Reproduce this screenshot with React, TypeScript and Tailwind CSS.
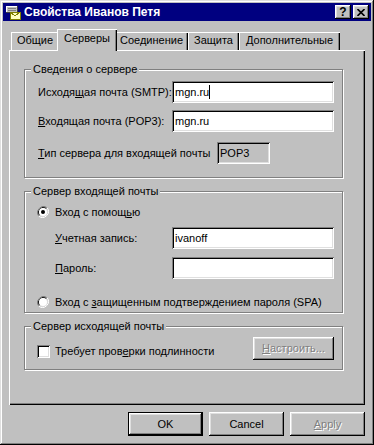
const raised =
  "shadow-[inset_-1px_-1px_#000,inset_1px_1px_#fff,inset_-2px_-2px_#808080,inset_2px_2px_#dfdfdf]"
const sunken =
  "shadow-[inset_1px_1px_#808080,inset_-1px_-1px_#fff,inset_2px_2px_#000,inset_-2px_-2px_#dfdfdf]"
const disabled = "text-[#808080] [text-shadow:1px_1px_0_#fff]"

function TitleIcon() {
  return (
    <svg width="16" height="16" viewBox="0 0 16 16" shapeRendering="crispEdges">
      <rect x="1" y="2" width="12" height="7" fill="#c0c0c0" />
      <rect x="1" y="2" width="12" height="1" fill="#fff" />
      <rect x="1" y="2" width="1" height="7" fill="#fff" />
      <rect x="12" y="2" width="1" height="7" fill="#404040" />
      <rect x="1" y="8" width="12" height="1" fill="#404040" />
      <rect x="3" y="4" width="8" height="1" fill="#808080" />
      <rect x="3" y="6" width="8" height="1" fill="#808080" />
      <rect x="5" y="8" width="10" height="7" fill="#ffffc0" stroke="#808000" strokeWidth="1" />
      <path d="M5.5 8.5 L10 12 L14.5 8.5" fill="none" stroke="#808000" strokeWidth="1" />
    </svg>
  )
}

function TitleButton({ children }: { children: React.ReactNode }) {
  return (
    <div className={`w-[16px] h-[14px] bg-[#c0c0c0] flex items-center justify-center ${raised}`}>
      {children}
    </div>
  )
}

function Tab({ label, width, active }: { label: string; width: number; active?: boolean }) {
  if (active) {
    return (
      <div
        className="relative z-10 -mx-[2px] -mb-[1px] h-[22px] bg-[#c0c0c0] flex justify-center pt-[3px] shadow-[inset_1px_1px_#fff,inset_-1px_0_#000,inset_-2px_0_#808080]"
        style={{ width: width + 4 }}
      >
        {label}
      </div>
    )
  }
  return (
    <div
      className="h-[18px] bg-[#c0c0c0] flex justify-center pt-[2px] shadow-[inset_1px_1px_#fff,inset_-1px_0_#000,inset_-2px_0_#808080]"
      style={{ width }}
    >
      {label}
    </div>
  )
}

function Group({ title, className, children }: { title: string; className: string; children: React.ReactNode }) {
  return (
    <div className={`relative border border-[#808080] shadow-[inset_1px_1px_#fff,1px_1px_#fff] ${className}`}>
      <span className="absolute left-[6px] -top-[8px] bg-[#c0c0c0] px-[2px] leading-[14px]">{title}</span>
      {children}
    </div>
  )
}

function TextBox({ value, cursor, grey, className }: { value: string; cursor?: boolean; grey?: boolean; className: string }) {
  return (
    <div className={`h-[22px] flex items-center pl-[3px] ${grey ? "bg-[#c0c0c0]" : "bg-white"} ${sunken} ${className}`}>
      <span>{value}</span>
      {cursor && <span className="w-[1px] h-[14px] bg-black" />}
    </div>
  )
}

function Radio({ checked }: { checked?: boolean }) {
  return (
    <svg width="12" height="12" viewBox="0 0 12 12">
      <path d="M10.2 1.8 A6 6 0 0 0 1.8 10.2" fill="none" stroke="#808080" strokeWidth="1" />
      <path d="M9.5 2.5 A5 5 0 0 0 2.5 9.5" fill="none" stroke="#000" strokeWidth="1" />
      <path d="M1.8 10.2 A6 6 0 0 0 10.2 1.8" fill="none" stroke="#fff" strokeWidth="1" />
      <path d="M2.5 9.5 A5 5 0 0 0 9.5 2.5" fill="none" stroke="#dfdfdf" strokeWidth="1" />
      <circle cx="6" cy="6" r="4" fill="#fff" />
      {checked && <circle cx="6" cy="6" r="2" fill="#000" />}
    </svg>
  )
}

function Button({ children, isDefault, className }: { children: React.ReactNode; isDefault?: boolean; className: string }) {
  return (
    <div className={`${isDefault ? "border border-black" : ""} ${className}`}>
      <div className={`w-full h-full bg-[#c0c0c0] flex items-center justify-center ${raised}`}>{children}</div>
    </div>
  )
}

export default function App() {
  return (
    <div className="w-[374px] h-[445px] p-[3px] bg-[#c0c0c0] text-[11px] leading-[13px] text-black font-['Liberation_Sans',Arial,sans-serif] shadow-[inset_-1px_-1px_#000,inset_1px_1px_#dfdfdf,inset_-2px_-2px_#808080,inset_2px_2px_#fff]">
      {/* title bar */}
      <div className="h-[18px] bg-[#000080] flex items-center pl-[2px] pr-[2px]">
        <TitleIcon />
        <span className="ml-[3px] text-white font-bold text-[12px]">Свойства Иванов Петя</span>
        <div className="ml-auto flex gap-[2px]">
          <TitleButton>
            <span className="font-bold text-[12px] leading-[12px]">?</span>
          </TitleButton>
          <TitleButton>
            <svg width="8" height="7" viewBox="0 0 8 7">
              <path d="M0.5 0 L7.5 7 M7.5 0 L0.5 7" stroke="#000" strokeWidth="1.6" />
            </svg>
          </TitleButton>
        </div>
      </div>

      <div className="pl-[6px] pt-[8px]">
        {/* tabs */}
        <div className="relative z-10 h-[21px] flex items-end pl-[2px]">
          <Tab label="Общие" width={48} />
          <Tab label="Серверы" width={56} active />
          <Tab label="Соединение" width={73} />
          <Tab label="Защита" width={51} />
          <Tab label="Дополнительные" width={101} />
        </div>

        {/* panel */}
        <div className={`w-[356px] h-[355px] pl-[15px] pt-[19px] ${"shadow-[inset_1px_1px_#fff,inset_-1px_-1px_#000,inset_-2px_-2px_#808080]"}`}>
          <Group title="Сведения о сервере" className="w-[319px] h-[109px] pt-[11px] pl-[13px]">
            <div className="flex items-center h-[22px]">
              <span className="w-[134px]">
                Исходя<u>щ</u>ая почта (SMTP):
              </span>
              <TextBox value="mgn.ru" cursor className="w-[162px]" />
            </div>
            <div className="flex items-center h-[22px] mt-[7px]">
              <span className="w-[134px]">
                <u>В</u>ходящая почта (POP3):
              </span>
              <TextBox value="mgn.ru" className="w-[162px]" />
            </div>
            <div className="flex items-center h-[22px] mt-[10px]">
              <span className="w-[179px]">
                <u>Т</u>ип сервера для входящей почты
              </span>
              <TextBox value="POP3" grey className="w-[53px]" />
            </div>
          </Group>

          <Group title="Сервер входящей почты" className="mt-[13px] w-[319px] h-[122px] pt-[13px] pl-[12px]">
            <div className="flex items-center h-[14px] gap-[6px]">
              <Radio checked />
              <span>
                Вход с помощ<u>ь</u>ю
              </span>
            </div>
            <div className="flex items-center h-[22px] mt-[8px] pl-[18px]">
              <span className="w-[117px]">
                <u>У</u>четная запись:
              </span>
              <TextBox value="ivanoff" className="w-[162px]" />
            </div>
            <div className="flex items-center h-[22px] mt-[8px] pl-[18px]">
              <span className="w-[117px]">
                <u>П</u>ароль:
              </span>
              <TextBox value="" className="w-[162px]" />
            </div>
            <div className="flex items-center h-[14px] gap-[6px] mt-[16px]">
              <Radio />
              <span>
                Вход с <u>з</u>ащищенным подтверждением пароля (SPA)
              </span>
            </div>
          </Group>

          <Group title="Сервер исходящей почты" className="mt-[13px] w-[319px] h-[44px] pt-[10px] pl-[12px] pr-[8px] flex items-start">
            <div className="flex items-center h-[14px] mt-[7px] gap-[5px]">
              <div className={`w-[13px] h-[13px] bg-white ${sunken}`} />
              <span>
                Требует пров<u>е</u>рки подлинности
              </span>
            </div>
            <Button className="ml-auto w-[81px] h-[23px]">
              <span className={disabled}>
                <u>Н</u>астроить...
              </span>
            </Button>
          </Group>
        </div>

        {/* bottom buttons */}
        <div className="flex justify-end gap-[6px] mt-[7px] pr-[6px]">
          <Button isDefault className="w-[75px] h-[24px]">
            OK
          </Button>
          <Button className="w-[75px] h-[24px]">Cancel</Button>
          <Button className="w-[75px] h-[24px]">
            <span className={disabled}>
              <u>A</u>pply
            </span>
          </Button>
        </div>
      </div>
    </div>
  )
}
